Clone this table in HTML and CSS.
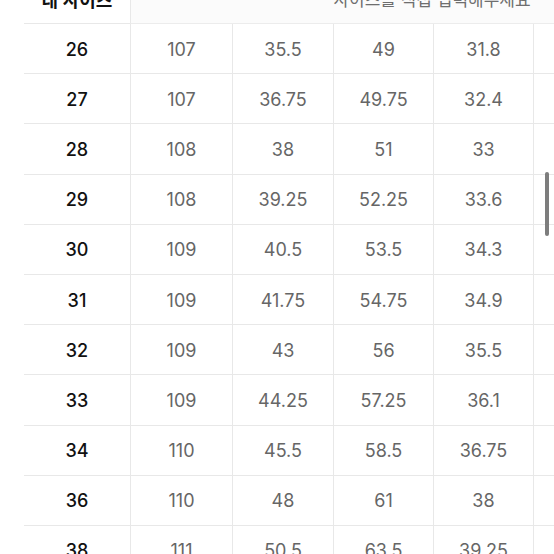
FILE: index.html
```html
<!DOCTYPE html>
<html lang="ko">
<head>
<meta charset="utf-8">
<link rel="stylesheet" href="styles.css">
</head>
<body>
<div class="viewport">
  <div class="table">
    <div class="cell head first">내 사이즈</div>
    <div class="cell head wide">사이즈를 직접 입력해주세요</div>

    <div class="cell first">26</div><div class="cell">107</div><div class="cell">35.5</div><div class="cell">49</div><div class="cell">31.8</div><div class="cell"></div><div class="cell"></div>
    <div class="cell first">27</div><div class="cell">107</div><div class="cell">36.75</div><div class="cell">49.75</div><div class="cell">32.4</div><div class="cell"></div><div class="cell"></div>
    <div class="cell first">28</div><div class="cell">108</div><div class="cell">38</div><div class="cell">51</div><div class="cell">33</div><div class="cell"></div><div class="cell"></div>
    <div class="cell first">29</div><div class="cell">108</div><div class="cell">39.25</div><div class="cell">52.25</div><div class="cell">33.6</div><div class="cell"></div><div class="cell"></div>
    <div class="cell first">30</div><div class="cell">109</div><div class="cell">40.5</div><div class="cell">53.5</div><div class="cell">34.3</div><div class="cell"></div><div class="cell"></div>
    <div class="cell first">31</div><div class="cell">109</div><div class="cell">41.75</div><div class="cell">54.75</div><div class="cell">34.9</div><div class="cell"></div><div class="cell"></div>
    <div class="cell first">32</div><div class="cell">109</div><div class="cell">43</div><div class="cell">56</div><div class="cell">35.5</div><div class="cell"></div><div class="cell"></div>
    <div class="cell first">33</div><div class="cell">109</div><div class="cell">44.25</div><div class="cell">57.25</div><div class="cell">36.1</div><div class="cell"></div><div class="cell"></div>
    <div class="cell first">34</div><div class="cell">110</div><div class="cell">45.5</div><div class="cell">58.5</div><div class="cell">36.75</div><div class="cell"></div><div class="cell"></div>
    <div class="cell first">36</div><div class="cell">110</div><div class="cell">48</div><div class="cell">61</div><div class="cell">38</div><div class="cell"></div><div class="cell"></div>
    <div class="cell first">38</div><div class="cell">111</div><div class="cell">50.5</div><div class="cell">63.5</div><div class="cell">39.25</div><div class="cell"></div><div class="cell"></div>
  </div>
  <div class="scrollbar"></div>
</div>
</body>
</html>
```

FILE: styles.css
```css
html, body {
  margin: 0;
  padding: 0;
  background: #ffffff;
}
body {
  width: 554px;
  height: 554px;
  overflow: hidden;
  font-family: Inter, "Noto Sans CJK KR", sans-serif;
}
.viewport {
  position: relative;
  width: 554px;
  height: 554px;
  overflow: hidden;
}
.table {
  display: grid;
  grid-template-columns: 106px 102px 101px 100px 100px 100px 100px;
  grid-template-rows: 50px;
  grid-auto-rows: 50.2px;
  width: 709px;
  margin-left: 24px;
  margin-top: -26px;
}
.cell {
  display: flex;
  align-items: center;
  justify-content: center;
  box-sizing: border-box;
  border-bottom: 1px solid #e8e8e8;
  border-left: 1px solid #e8e8e8;
  font-size: 18px;
  color: #666666;
  padding-top: 1px;
}
.cell.first {
  border-left: none;
  color: #111111;
  font-weight: 500;
}
.cell.head {
  font-size: 18px;
  padding-top: 0;
}
.cell.head.first {
  color: #111111;
  font-weight: 600;
}
.cell.wide {
  grid-column: 2 / 8;
  color: #6e6e6e;
  font-size: 17px;
  border-bottom-color: #ececec;
  background: #fbfbfb;
}
.scrollbar {
  position: absolute;
  left: 545px;
  top: 172px;
  width: 4px;
  height: 64px;
  border-radius: 2px;
  background: #7d7d7d;
}
```
